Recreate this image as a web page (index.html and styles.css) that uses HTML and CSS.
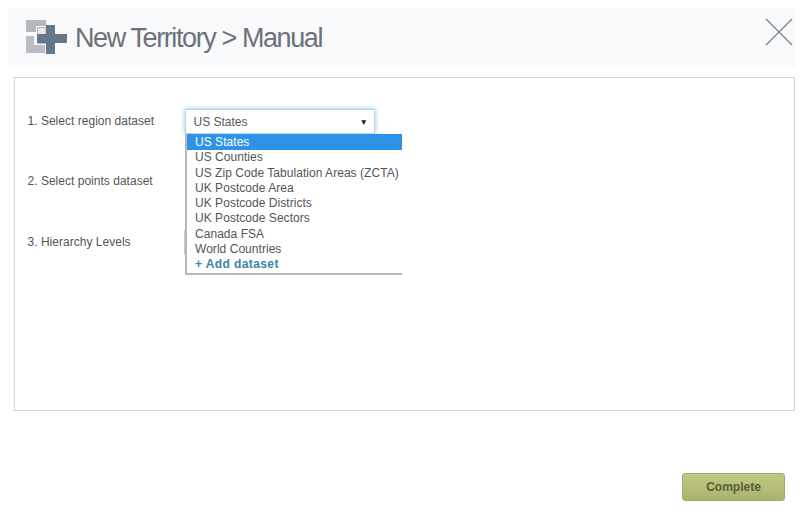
FILE: index.html
```html
<!DOCTYPE html>
<html lang="en">
<head>
<meta charset="utf-8">
<title>New Territory</title>
<link rel="stylesheet" href="styles.css">
</head>
<body>
<div class="dialog">
  <header class="head">
    <svg class="logo" width="42" height="36" viewBox="0 0 42 36" aria-hidden="true">
      <path class="l1" d="M0 1H20V7H10V13H0Z"/>
      <path class="l2" d="M0 17H8V26H19V34H0Z"/>
      <path class="l3" d="M11.500 8.500H20V24.500H11.500Z"/>
      <path class="l4" d="M20 6H29V15H41V24H29V35H20V24H11V15H20Z"/>
    </svg>
    <h1 class="title">New Territory &gt; Manual</h1>
    <svg class="close" width="28" height="28" viewBox="0 0 28 28" aria-hidden="true">
      <path d="M1 1L27 27M27 1L1 27"/>
    </svg>
  </header>
  <main class="panel">
    <div class="row row-1">
      <span class="label">1. Select region dataset</span>
      <div class="select-wrap">
        <div class="select"><span>US States</span><span class="arrow">▼</span></div>
        <ul class="menu">
          <li class="on">US States</li>
          <li>US Counties</li>
          <li>US Zip Code Tabulation Areas (ZCTA)</li>
          <li>UK Postcode Area</li>
          <li>UK Postcode Districts</li>
          <li>UK Postcode Sectors</li>
          <li>Canada FSA</li>
          <li>World Countries</li>
          <li class="add">+ Add dataset</li>
        </ul>
      </div>
    </div>
    <div class="row row-2"><span class="label">2. Select points dataset</span></div>
    <div class="row row-3"><span class="label">3. Hierarchy Levels</span><span class="hidden-edge"></span></div>
  </main>
  <footer class="foot"><button class="complete" type="button">Complete</button></footer>
</div>
</body>
</html>
```
FILE: styles.css
```css
* { box-sizing: border-box; }
html, body { margin: 0; padding: 0; background: #fff; }
body { width: 804px; height: 518px; overflow: hidden; font-family: "Liberation Sans", Arial, sans-serif; color: #555; }
.dialog { display: flex; flex-direction: column; height: 518px; padding: 8px 9px 0 8px; }
.head { display: flex; align-items: center; height: 59px; padding: 0 2px 0 18px; background: #f7f9fb; flex: none; }
.logo { flex: none; margin-top: -2px; }
.l1 { fill: #b4b7be; }
.l2 { fill: #b9bcc3; }
.l3 { fill: #e6e8eb; stroke: #b4b7be; stroke-width: 1; }
.l4 { fill: #66778a; }
.title { flex: 1; margin: 0 0 0 7px; font-size: 27px; font-weight: 400; letter-spacing: -1.4px; color: #6c7278; line-height: 40px; }
.close { flex: none; margin-top: -12px; }
.close path { stroke: #7f8385; stroke-width: 1.3; fill: none; }
.panel { margin: 10px 0 0 6px; height: 334px; border: 1px solid #d3d3d3; background: #fff; padding: 31px 0 0 12.500px; flex: none; }
.row { display: flex; font-size: 12px; line-height: 16px; }
.label { width: 157.500px; flex: none; letter-spacing: 0.02px; color: #555; }
.row-1 { height: 60px; padding-top: 4px; }
.row-2 { height: 61px; padding-top: 4px; }
.row-3 { position: relative; padding-top: 4px; }
.hidden-edge { position: absolute; left: 156.500px; top: 0; width: 2px; height: 25px; background: #c9c9c9; }
.select-wrap { position: relative; z-index: 1; width: 190px; margin-top: -4px; }
.select { display: flex; justify-content: space-between; align-items: center; width: 190px; height: 25px; padding: 0 6px 0 7.500px; background: #fff; border: 1px solid #b5d8e8; box-shadow: 0 0 5px #8cc5dd; font-size: 12px; color: #555; }
.arrow { font-size: 8.500px; color: #222; }
.menu { list-style: none; position: absolute; left: 0; top: 25px; width: 217px; margin: 0; padding: 0; background: #fff; border-left: 2px solid #b8b8b8; border-bottom: 2px solid #b5b8b8; font-size: 12px; line-height: 15.300px; letter-spacing: 0.04px; color: #555; }
.menu li { padding-left: 8px; white-space: nowrap; }
.menu .on { background: #2e93e6; color: #fff; padding-top: 1px; }
.menu .add { font-weight: 700; letter-spacing: 0.4px; color: #3a87a3; }
.foot { display: flex; justify-content: flex-end; padding: 62px 10px 0 0; }
.complete { width: 103px; height: 28px; border: 1px solid #9fa96b; border-radius: 3px; background: linear-gradient(#c1c885, #a9b36e); font: 700 12px "Liberation Sans", Arial, sans-serif; color: #585f35; padding: 0; }
```
